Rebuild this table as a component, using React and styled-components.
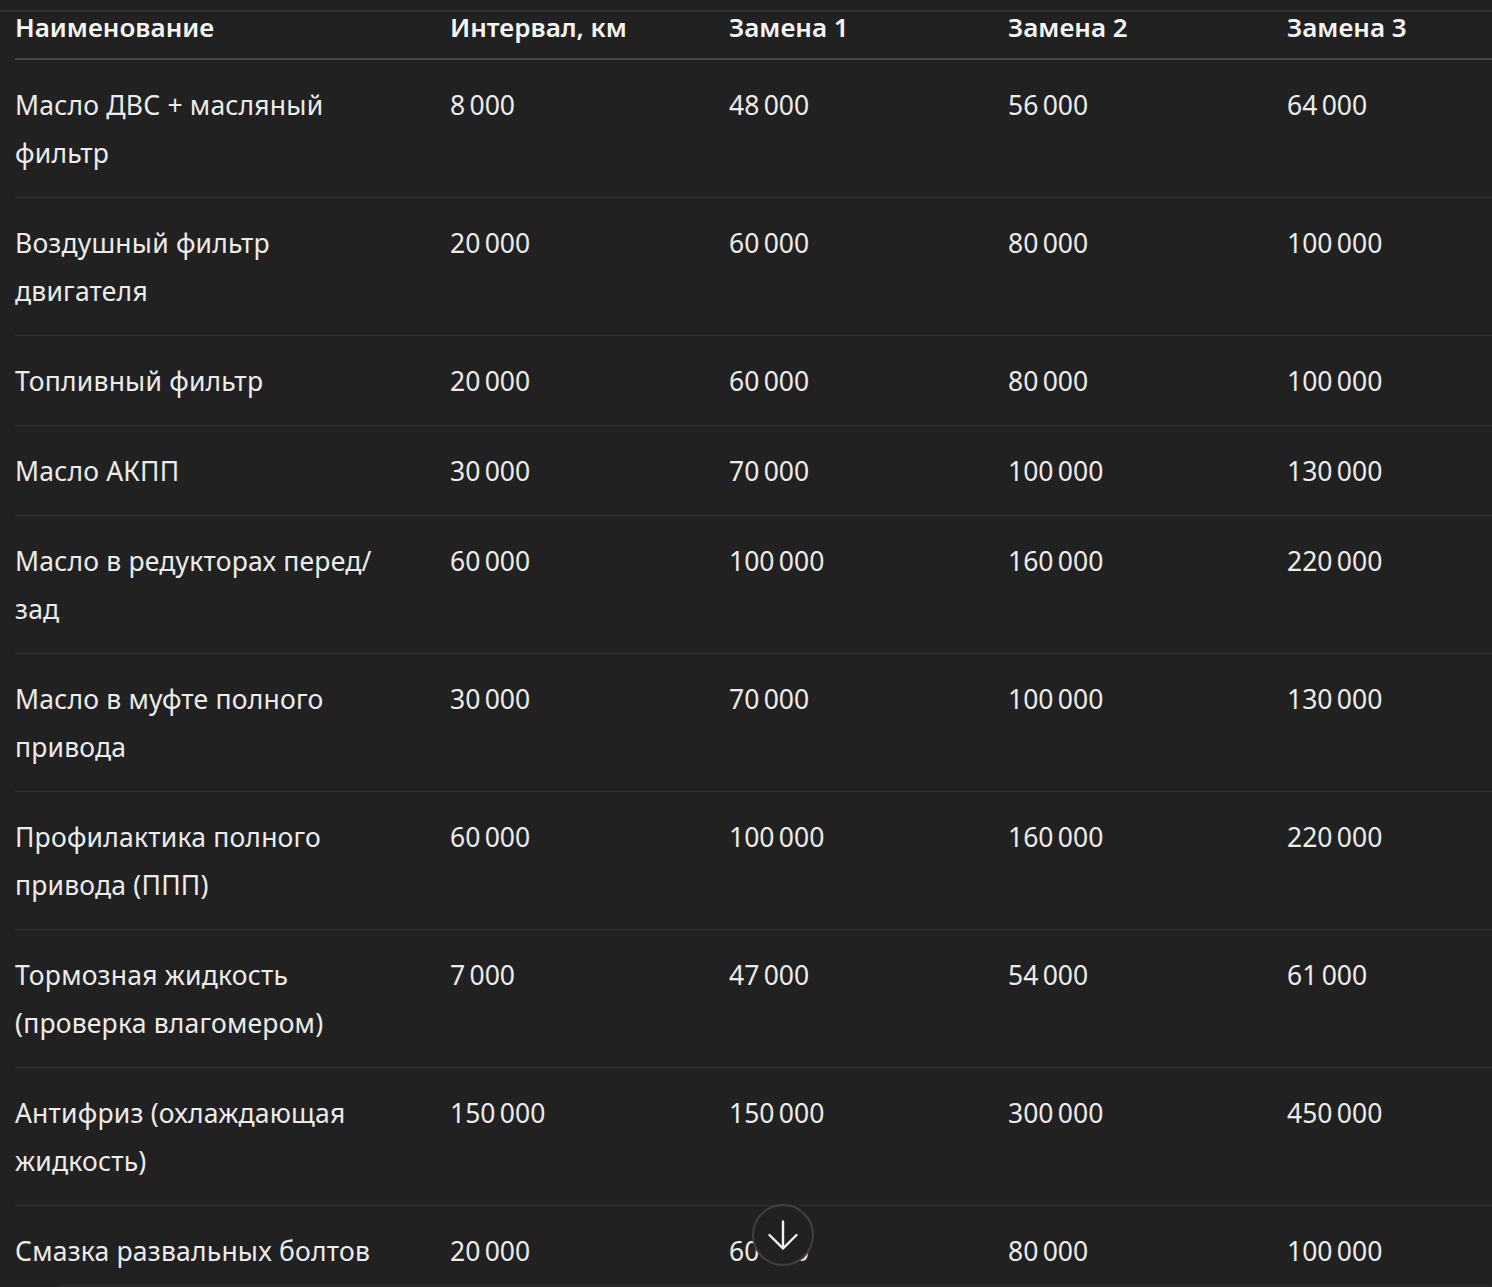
import React from "react";
import styled, { createGlobalStyle } from "styled-components";

const GlobalStyle = createGlobalStyle`
  html, body {
    margin: 0;
    padding: 0;
    background: #212121;
    overflow: hidden;
  }
  body {
    font-family: "Noto Sans", "Open Sans", Arial, sans-serif;
    color: #ececec;
  }
`;

const nb = "\u202F";
const n = (v) => v.replace(" ", nb);

const rows = [
  ["Масло ДВС + масляный фильтр", "8 000", "48 000", "56 000", "64 000"],
  ["Воздушный фильтр двигателя", "20 000", "60 000", "80 000", "100 000"],
  ["Топливный фильтр", "20 000", "60 000", "80 000", "100 000"],
  ["Масло АКПП", "30 000", "70 000", "100 000", "130 000"],
  ["Масло в редукторах перед/зад", "60 000", "100 000", "160 000", "220 000"],
  ["Масло в муфте полного привода", "30 000", "70 000", "100 000", "130 000"],
  ["Профилактика полного привода (ППП)", "60 000", "100 000", "160 000", "220 000"],
  ["Тормозная жидкость (проверка влагомером)", "7 000", "47 000", "54 000", "61 000"],
  ["Антифриз (охлаждающая жидкость)", "150 000", "150 000", "300 000", "450 000"],
  ["Смазка развальных болтов", "20 000", "60 000", "80 000", "100 000"],
];

const headers = ["Наименование", "Интервал, км", "Замена 1", "Замена 2", "Замена 3"];

const App = () => {
  return (
    <>
      <GlobalStyle />
      <Page>
        <TopRule />
        <Table>
          <colgroup>
            <col style={{ width: 435 }} />
            <col style={{ width: 279 }} />
            <col style={{ width: 279 }} />
            <col style={{ width: 279 }} />
            <col />
          </colgroup>
          <thead>
            <tr>
              {headers.map((h) => (
                <HeadCell key={h}>{h}</HeadCell>
              ))}
            </tr>
          </thead>
          <tbody>
            {rows.map((r) => (
              <Row key={r[0]}>
                <NameCell>{r[0]}</NameCell>
                {r.slice(1).map((v, i) => (
                  <Cell key={i}>{n(v)}</Cell>
                ))}
              </Row>
            ))}
          </tbody>
        </Table>
        <ScrollButton aria-label="Scroll down">
          <svg width="30" height="30" viewBox="0 0 30 30" fill="none">
            <path
              d="M15 1.5v27M1.5 15l13.5 13.5L28.5 15"
              stroke="#f2f2f2"
              strokeWidth="2.4"
              strokeLinecap="round"
              strokeLinejoin="round"
            />
          </svg>
        </ScrollButton>
        <Composer />
      </Page>
    </>
  );
};

const Page = styled.div`
  position: relative;
  min-height: 1287px;
  padding-top: 10px;
  box-sizing: border-box;
`;

const TopRule = styled.div`
  height: 2px;
  background: #303030;
`;

const Table = styled.table`
  margin-left: 15px;
  width: 1500px;
  border-collapse: collapse;
  table-layout: fixed;
`;

const HeadCell = styled.th`
  text-align: left;
  font-weight: 600;
  font-size: 26px;
  line-height: 30px;
  color: #f5f5f5;
  padding: 0 0 16px 0;
  border-bottom: 2px solid #474747;
  white-space: nowrap;
`;

const Row = styled.tr`
  border-bottom: 1px solid #323232;
`;

const Cell = styled.td`
  font-size: 26.5px;
  letter-spacing: 0.2px;
  line-height: 48px;
  padding: 21px 0 20px 0;
  vertical-align: top;
  color: #ececec;
  white-space: nowrap;
`;

const NameCell = styled(Cell)`
  white-space: normal;
  padding-right: 60px;
`;

const ScrollButton = styled.button`
  position: absolute;
  left: 752px;
  top: 1204px;
  width: 62px;
  height: 62px;
  border-radius: 50%;
  border: 2px solid #414141;
  background: #212121;
  display: flex;
  align-items: center;
  justify-content: center;
  padding: 0;
  box-sizing: border-box;
`;

const Composer = styled.div`
  position: absolute;
  left: 40px;
  right: -20px;
  top: 1284px;
  height: 60px;
  border-radius: 28px;
  background: #2a2a2a;
`;

export default App;
